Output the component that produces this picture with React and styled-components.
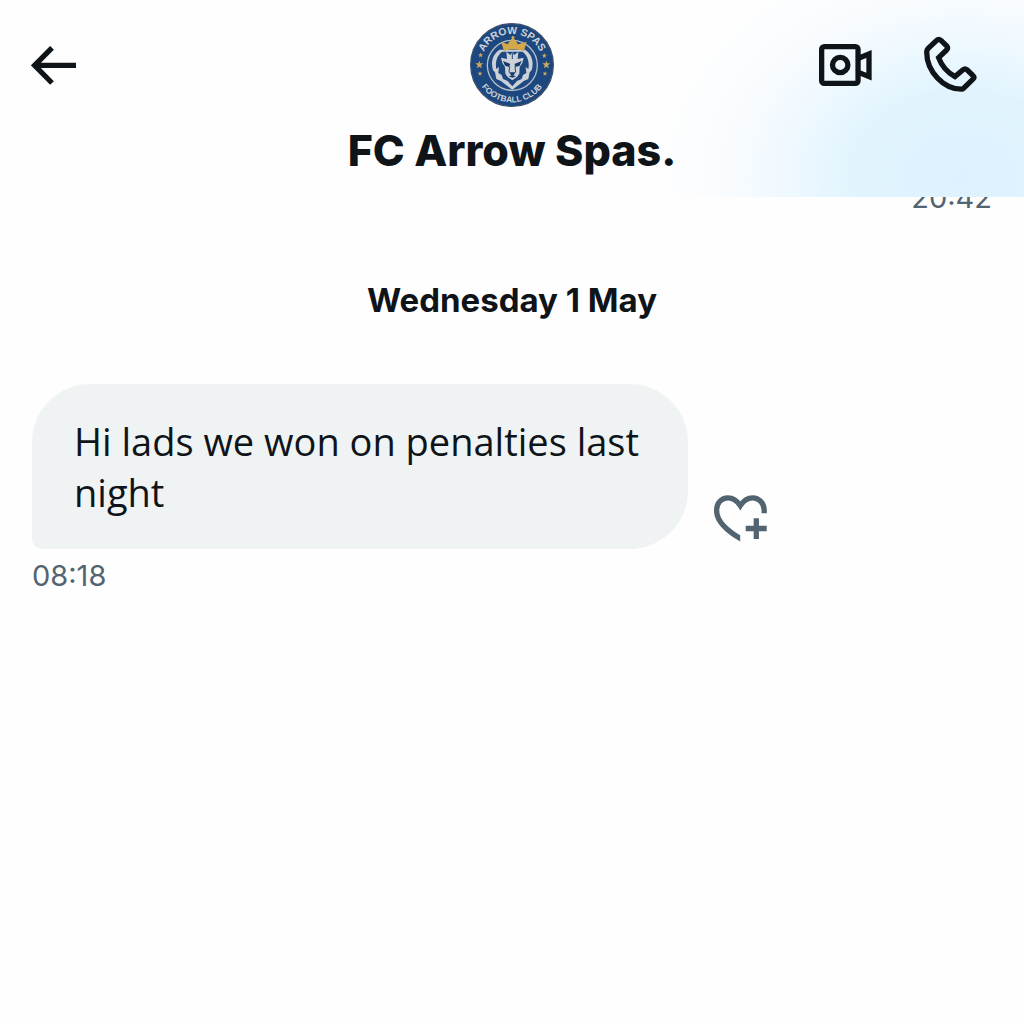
import React from 'react';
import styled, { createGlobalStyle } from 'styled-components';

const GlobalStyle = createGlobalStyle`
  * {
    box-sizing: border-box;
  }

  body {
    margin: 0;
    background: #fefefe;
    color: #0f1419;
    font-family: Inter, "Liberation Sans", sans-serif;
  }
`;

const Header = styled.header`
  padding: 23px 0 17px;
  background:
    radial-gradient(ellipse 310px 240px at 94% 90%, #def2fe 0%, #e1f4fe 36%, rgba(234, 247, 255, 0.85) 54%, rgba(244, 250, 255, 0.6) 74%, rgba(254, 254, 254, 0) 100%),
    #fefefe;
`;

const Toolbar = styled.div`
  display: grid;
  grid-template-columns: 1fr auto 1fr;
  align-items: center;
  padding: 0 31px;
`;

const Actions = styled.div`
  display: flex;
  align-items: center;
  justify-content: flex-end;
  gap: 52px;
  padding-right: 16px;
`;

const IconButton = styled.button`
  display: flex;
  justify-self: start;
  padding: 0;
  border: 0;
  background: none;
  color: ${props => props.$muted ? '#536471' : '#0f1419'};
  cursor: pointer;

  svg {
    display: block;
    fill: none;
    stroke: currentColor;
    stroke-width: 5.3;
  }
`;

const Title = styled.h1`
  margin: 13px 0 0;
  font-size: 43px;
  font-weight: 800;
  line-height: 60px;
  text-align: center;
`;

const Time = styled.time`
  display: block;
  color: #536471;
  font-size: 29px;
  line-height: 36px;
`;

const Cutoff = styled.div`
  display: flex;
  align-items: flex-end;
  justify-content: flex-end;
  height: 19px;
  overflow: hidden;
`;

const Conversation = styled.main`
  padding: 0 32px;
`;

const DateHeading = styled.h2`
  margin: 62px 0;
  font-size: 33px;
  font-weight: 700;
  line-height: 44px;
  text-align: center;
`;

const MessageRow = styled.div`
  display: flex;
  align-items: flex-end;
  gap: 26px;
  margin-bottom: 9px;

  button {
    margin-bottom: 7px;
  }
`;

const Bubble = styled.p`
  max-width: 656px;
  margin: 0;
  padding: 32px 42px 31px;
  border-radius: 58px 58px 58px 10px;
  background: #eff3f4;
  font-family: "Open Sans", sans-serif;
  font-size: 38px;
  line-height: 51px;
`;

const Crest = styled.svg`
  display: block;
  width: 84px;
  height: 84px;
`;

const CrestText = styled.text`
  fill: #cdd3d8;
  font-family: "Liberation Sans", sans-serif;
  font-size: ${props => props.$size}px;
  font-weight: bold;
  text-anchor: middle;
`;

const STAR = 'M0-12 3-4 12-4 5 2 7 11 0 6-7 11-5 2-12-4-3-4Z';

const STARS = [
  { x: 57, y: 151, scale: 1 },
  { x: 258, y: 151, scale: 1 },
  { x: 61, y: 122, scale: 0.65 },
  { x: 252, y: 124, scale: 0.65 },
  { x: 59, y: 178, scale: 0.6 },
  { x: 254, y: 178, scale: 0.6 },
];

const ClubCrest = () => (
  <Crest viewBox="29 26 252 252" role="img" aria-label="Arrow Spas Football Club">
    <defs>
      <path id="crest-top" d="M62 152a93 93 0 0 1 186 0" />
      <path id="crest-bottom" d="M43 152a112 112 0 0 0 224 0" />
    </defs>
    <circle cx="155" cy="152" r="124" fill="#1d477f" stroke="#3b506c" strokeWidth="4" />
    <circle cx="156" cy="153" r="75" fill="#1f4a84" stroke="#b4c0cb" strokeWidth="4" />
    <CrestText $size={31}>
      <textPath href="#crest-top" startOffset="50%">ARROW SPAS</textPath>
    </CrestText>
    <CrestText $size={25}>
      <textPath href="#crest-bottom" startOffset="50%">FOOTBALL CLUB</textPath>
    </CrestText>
    {STARS.map(({ x, y, scale }) => (
      <path key={`${x}-${y}`} d={STAR} fill="#c9a760" transform={`translate(${x} ${y}) scale(${scale})`} />
    ))}
    {/* mane */}
    <path fill="#cbd1d6" d="M118 106C99 118 90 140 98 168L104 174 108 194 122 200 132 208 156 226 180 208 190 200 204 194 208 174 214 168C222 140 213 118 194 106Z" />
    <path fill="#1d477f" d="M126 112C110 122 104 144 108 164L116 158 114 176 124 182 128 194 142 200 156 216 170 200 184 194 188 182 198 176 196 158 204 164C208 144 202 122 186 112Z" />
    {/* face */}
    <path fill="#cbd1d6" d="M138 112L150 122 156 114 162 122 174 112 172 134 190 130 186 146 178 158 177 178 170 188 156 198 142 188 135 178 134 158 126 146 122 130 140 134Z" />
    <path fill="#173a6c" d="M128 140L150 149 146 158 134 154ZM184 140L162 149 166 158 178 154ZM146 174H166L160 182H152ZM145 186L156 182 167 186 156 190Z" />
    <path fill="none" stroke="#1d477f" strokeWidth="3" d="M148 156L146 174M164 156L166 174M156 116V134" />
    {/* crown */}
    <path fill="#d2a848" d="M122 82l20 8 16-23 15 23 26-8-8 28q-33-10-60 0Z" />
    <circle cx="158" cy="69" r="4" fill="#d2a848" />
  </Crest>
);

const ArrowIcon = () => (
  <svg width="45" height="39" viewBox="0 0 45 39" aria-hidden="true">
    <path d="M21 1.8 3.6 19.4 21 37M3.6 19.4H45" />
  </svg>
);

const VideoIcon = () => (
  <svg width="53" height="42" viewBox="0 0 53 42" aria-hidden="true">
    <rect x="2.65" y="2.65" width="36.4" height="36.7" rx="2.6" />
    <circle cx="21.2" cy="21" r="7.7" />
    <path d="M39.5 14.2 50 10V32.6L39.5 28.4" />
  </svg>
);

const PhoneIcon = () => (
  <svg width="53" height="58" viewBox="0 0 53 58" aria-hidden="true">
    <path d="M12.4 4.6 4 12.6Q2.7 14 2.7 16C2.7 36 20 53.2 37.5 53.2Q38.7 53.2 39.5 52.4L49 43.2Q50.8 41.4 49 39.6L43 33.8Q41 32 39 33.8L31 40.6C23.5 36.5 17.5 29.5 14.6 21.6L22.6 14Q24.4 12.2 22.8 10L17 4.4Q14.7 2.4 12.4 4.6Z" />
  </svg>
);

const HeartPlusIcon = () => (
  <svg width="53" height="47" viewBox="0 0 53 47" aria-hidden="true">
    <clipPath id="heart-cut">
      <path d="M0 0H53V18.3H26.2V47H0Z" />
    </clipPath>
    <path clipPath="url(#heart-cut)" d="M50.2 20V15.5C50.2 8 45 2.8 38.5 2.8 33.5 2.8 29.5 5.5 26.3 10.6 23 5.5 19 2.8 14 2.8 7.5 2.8 2.6 8 2.6 15.5 2.6 26 11 35 29 45" />
    <path d="M31.7 33.5H52.7M42.3 23.3V44" />
  </svg>
);

const App = () => (
  <>
    <GlobalStyle />
    <Header>
      <Toolbar>
        <IconButton type="button" aria-label="Back">
          <ArrowIcon />
        </IconButton>
        <ClubCrest />
        <Actions>
          <IconButton type="button" aria-label="Video call">
            <VideoIcon />
          </IconButton>
          <IconButton type="button" aria-label="Call">
            <PhoneIcon />
          </IconButton>
        </Actions>
      </Toolbar>
      <Title>FC Arrow Spas.</Title>
    </Header>
    <Conversation>
      {/* the previous message, scrolled up behind the header */}
      <Cutoff>
        <Time>20:42</Time>
      </Cutoff>
      <DateHeading>Wednesday 1 May</DateHeading>
      <MessageRow>
        <Bubble>Hi lads we won on penalties last night</Bubble>
        <IconButton type="button" aria-label="Add reaction" $muted>
          <HeartPlusIcon />
        </IconButton>
      </MessageRow>
      <Time>08:18</Time>
    </Conversation>
  </>
);

export default App;
